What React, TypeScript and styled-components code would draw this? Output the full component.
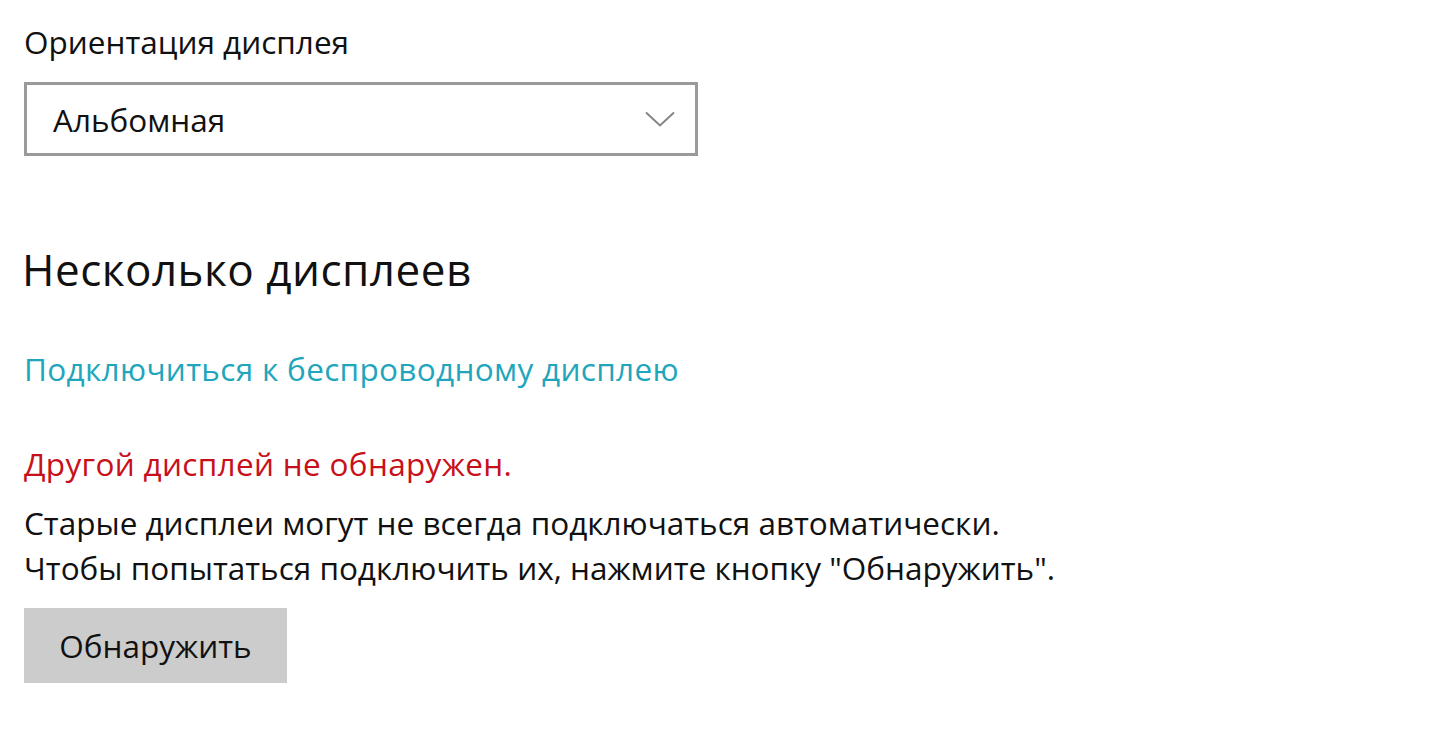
import React from "react";
import styled, { createGlobalStyle } from "styled-components";

const Global = createGlobalStyle`
  html, body { margin: 0; padding: 0; background: #ffffff; }
  body { font-family: "Open Sans", "Noto Sans", sans-serif; color: #000; }
`;

const Page = styled.div`
  display: flex;
  flex-direction: column;
  align-items: flex-start;
  padding: 22px 0 0 24px;
`;

const Label = styled.div`
  font-size: 31.5px;
  line-height: 40px;
  color: #111;
`;

const Select = styled.div`
  margin-top: 20px;
  box-sizing: border-box;
  width: 674px;
  height: 74px;
  border: 3px solid #9a9a9a;
  display: flex;
  align-items: center;
  justify-content: space-between;
  padding: 0 20px 0 26px;
  font-size: 31.5px;
  color: #111;
`;

const Heading = styled.h2`
  margin: 85px 0 0 -2px;
  font-size: 44px;
  line-height: 56px;
  letter-spacing: 0.5px;
  font-weight: 400;
  color: #111;
`;

const Link = styled.a`
  margin-top: 52px;
  font-size: 31.5px;
  line-height: 40px;
  letter-spacing: 0.33px;
  color: #1fa6bd;
  text-decoration: none;
`;

const ErrorText = styled.div`
  margin-top: 55px;
  font-size: 31.5px;
  line-height: 40px;
  letter-spacing: 0.32px;
  color: #c8101a;
`;

const Body = styled.p`
  margin: 16px 0 0;
  font-size: 31.5px;
  line-height: 45px;
  color: #111;
`;

const Button = styled.button`
  margin-top: 18px;
  width: 263px;
  height: 75px;
  border: none;
  background: #cccccc;
  font-family: inherit;
  font-size: 31.5px;
  color: #111;
  padding: 0;
`;

export default function App() {
  return (
    <>
      <Global />
      <Page>
        <Label>Ориентация дисплея</Label>
        <Select>
          <span>Альбомная</span>
          <svg width="30" height="16" viewBox="0 0 30 16" fill="none">
            <path d="M1 1.5 L15 14.5 L29 1.5" stroke="#858585" strokeWidth="2" />
          </svg>
        </Select>
        <Heading>Несколько дисплеев</Heading>
        <Link href="#">Подключиться к беспроводному дисплею</Link>
        <ErrorText>Другой дисплей не обнаружен.</ErrorText>
        <Body>
          Старые дисплеи могут не всегда подключаться автоматически.
          <br />
          Чтобы попытаться подключить их, нажмите кнопку "Обнаружить".
        </Body>
        <Button>Обнаружить</Button>
      </Page>
    </>
  );
}
